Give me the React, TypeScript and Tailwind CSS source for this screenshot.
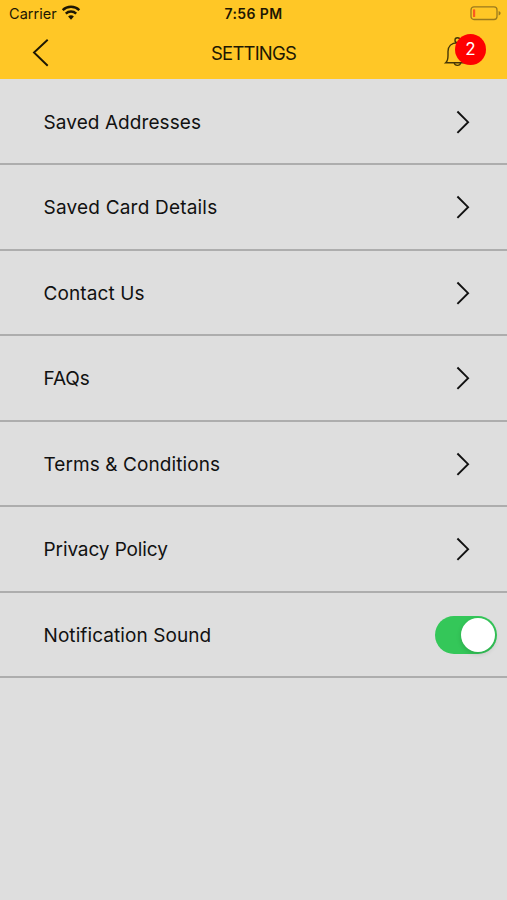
const rows = [
  { label: 'Saved Addresses', spacing: 'tracking-[0.08px]' },
  { label: 'Saved Card Details', spacing: 'tracking-[0.2px]' },
  { label: 'Contact Us', spacing: 'tracking-[0.1px]' },
  { label: 'FAQs', spacing: 'tracking-[-0.1px]' },
  { label: 'Terms & Conditions', spacing: 'tracking-[0.08px]' },
  { label: 'Privacy Policy', spacing: 'tracking-[-0.1px]' },
];

function Wifi() {
  return (
    <svg className="mt-[5px] ml-[4px] h-4 w-5" viewBox="0 0 20 16" fill="none" stroke="#1d1703" strokeWidth="2.4">
      <path d="M1.7 5.1C6.2 .7 13.8 .7 18.3 5.1" />
      <path d="M4.8 8.6C7.7 5.8 12.3 5.8 15.2 8.6" />
      <path d="M7.1 11.5C8.8 9.9 11.2 9.9 12.9 11.5L10 14.7Z" fill="#1d1703" stroke="none" />
    </svg>
  );
}

function Battery() {
  return (
    <svg className="absolute top-[6px] left-[470px] h-[15px] w-[32px]" viewBox="0 0 32 15" fill="none">
      <rect x="1" y=".9" width="26" height="12.6" rx="3" stroke="#9b7a1d" strokeWidth="1.3" />
      <rect x="3" y="3.3" width="2.2" height="7.8" rx=".7" fill="#fc5a1f" />
      <path d="M28.6 5.1c2.7.8 2.7 3.5 0 4.3Z" fill="#9b7a1d" />
    </svg>
  );
}

function Bell() {
  return (
    <svg className="absolute top-[36px] left-[443px] h-8 w-7" viewBox="0 0 28 32" fill="none" stroke="#453607" strokeWidth="1.4">
      <circle cx="14.5" cy="4.3" r="2.5" />
      <path d="M2.7 26.7C4.7 25 5 23 5 19.5V15.5C5 10.4 8.3 6.7 14.5 6.7S24 10.4 24 15.5v4c0 3.5.3 5.5 2.3 7.2Z" />
      <path d="M11.3 27c.5 3.2 5.8 3.2 6.3 0" />
    </svg>
  );
}

function Chevron() {
  return (
    <svg className="ml-auto mr-[37px] h-6 w-[15px]" viewBox="0 0 15 24" fill="none" stroke="#111" strokeWidth="1.9">
      <path d="M2.4 1.5L13.1 12.2L2.4 22.9" />
    </svg>
  );
}

function Divider() {
  return <span className="absolute inset-x-0 -bottom-[0.5px] h-[2px] bg-[#adadad]" />;
}

export default function App() {
  return (
    <main className="h-[900px] w-[507px] overflow-hidden bg-[#dedede] font-['Inter',sans-serif] text-[#111]">
      <header className="relative h-[79px] bg-[#ffc726] text-[#1d1703]">
        <div className="grid h-7 grid-cols-3">
          <div className="flex pl-[9px]">
            <span className="pt-[4px] text-[14.5px] leading-5 tracking-[0.05px]">Carrier</span>
            <Wifi />
          </div>
          <span className="pt-[4px] text-center text-[14px] leading-5 font-semibold tracking-[0.4px]">7:56 PM</span>
        </div>
        <Battery />
        <div className="flex h-[50px] items-center">
          <svg className="ml-[32px] h-[30px] w-[18px]" viewBox="0 0 18 30" fill="none" stroke="#1d1703" strokeWidth="1.9">
            <path d="M15.7 1.7L2 14.5L15.7 27.8" />
          </svg>
          <h1 className="ml-[161px] text-[18.5px] leading-6 font-normal tracking-[-0.8px]">SETTINGS</h1>
        </div>
        <Bell />
        <span className="absolute top-[34px] left-[455px] flex h-[31px] w-[31px] items-center justify-center rounded-full bg-[#fe0000] text-[17px] text-white">2</span>
      </header>
      <ul>
        {rows.map(({ label, spacing }) => (
          <li key={label} className="relative flex h-[85.5px] items-center pl-[43.5px]">
            <span className={`pt-[2px] text-[19px] leading-6 ${spacing}`}>{label}</span>
            <Chevron />
            <Divider />
          </li>
        ))}
        <li className="relative flex h-[85.5px] items-center pl-[43.5px]">
          <span className="pt-[2px] text-[19px] leading-6 tracking-[0.08px]">Notification Sound</span>
          <button aria-label="Notification Sound" className="mr-[10px] ml-auto flex h-[38px] w-[62px] items-center justify-end rounded-full bg-[#34c759] pr-[2px]">
            <span className="h-[34px] w-[34px] rounded-full bg-white shadow-[0_2px_5px_rgba(0,0,0,0.15)]" />
          </button>
          <Divider />
        </li>
      </ul>
    </main>
  );
}
